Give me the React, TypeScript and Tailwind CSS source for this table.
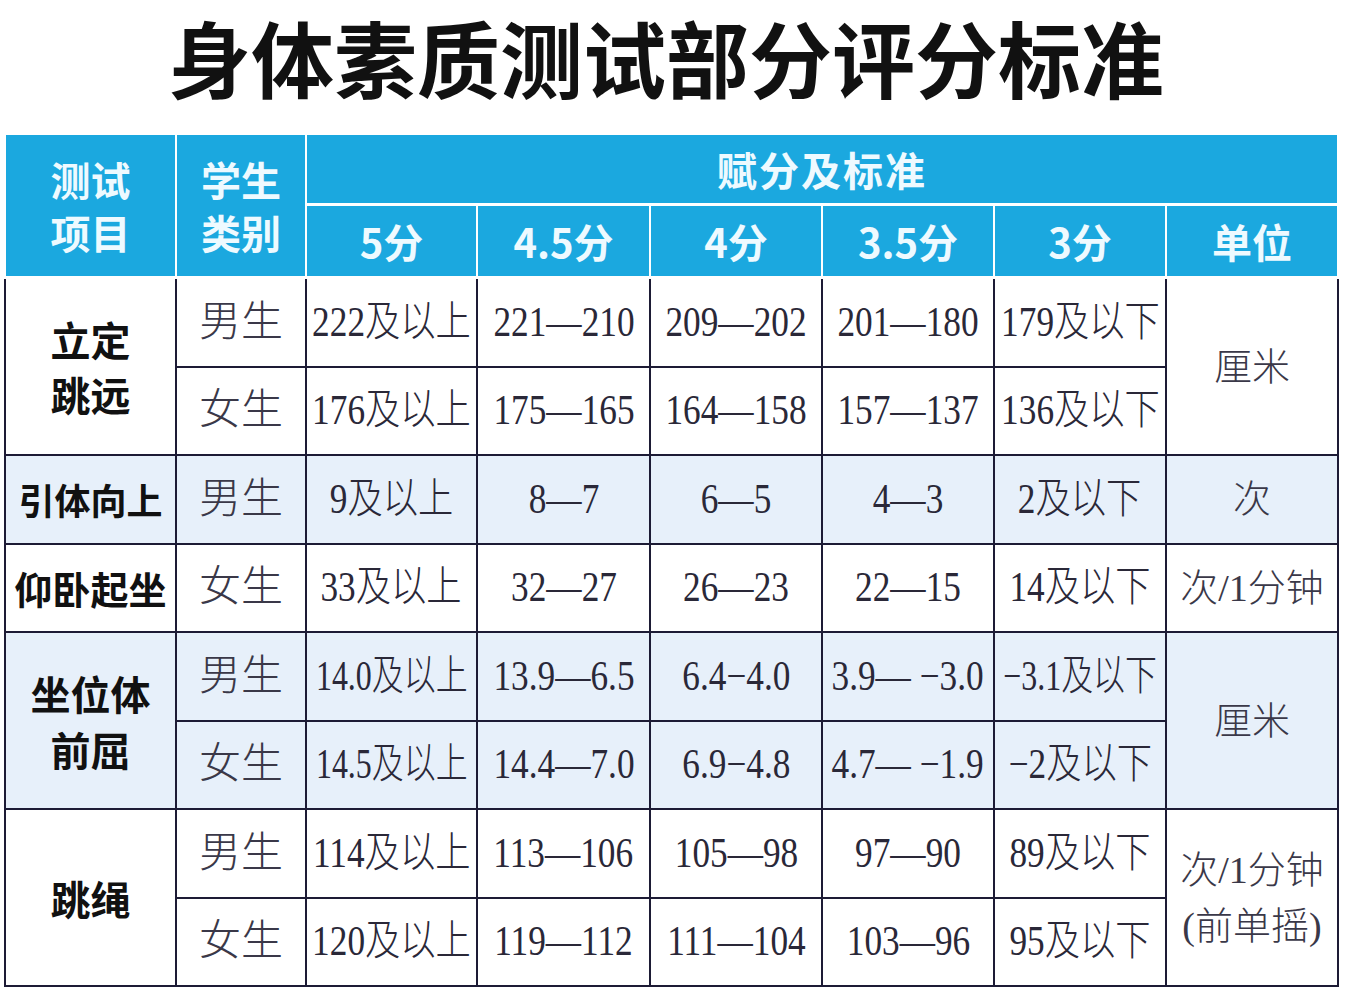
import React from 'react';

const sans = "font-['Noto_Sans_CJK_SC','Noto_Sans',sans-serif]";
const serif = "font-['Liberation_Serif','Noto_Sans_CJK_SC',serif]";

type Row = {
  item?: { label: React.ReactNode; span: number; size: string };
  group: string;
  values: string[];
  unit?: { label: React.ReactNode; span: number };
  tint: boolean;
};

const rows: Row[] = [
  {
    item: { label: <>立定<br />跳远</>, span: 2, size: 'text-[40px] leading-[55px]' },
    group: '男生',
    values: ['222及以上', '221—210', '209—202', '201—180', '179及以下'],
    unit: { label: '厘米', span: 2 },
    tint: false,
  },
  { group: '女生', values: ['176及以上', '175—165', '164—158', '157—137', '136及以下'], tint: false },
  {
    item: { label: '引体向上', span: 1, size: 'text-[36px] leading-[48px]' },
    group: '男生',
    values: ['9及以上', '8—7', '6—5', '4—3', '2及以下'],
    unit: { label: '次', span: 1 },
    tint: true,
  },
  {
    item: { label: '仰卧起坐', span: 1, size: 'text-[38px] leading-[48px]' },
    group: '女生',
    values: ['33及以上', '32—27', '26—23', '22—15', '14及以下'],
    unit: { label: '次/1分钟', span: 1 },
    tint: false,
  },
  {
    item: { label: <>坐位体<br />前屈</>, span: 2, size: 'text-[40px] leading-[56px]' },
    group: '男生',
    values: ['14.0及以上', '13.9—6.5', '6.4−4.0', '3.9— −3.0', '−3.1及以下'],
    unit: { label: '厘米', span: 2 },
    tint: true,
  },
  { group: '女生', values: ['14.5及以上', '14.4—7.0', '6.9−4.8', '4.7— −1.9', '−2及以下'], tint: true },
  {
    item: { label: '跳绳', span: 2, size: 'text-[40px] leading-[52px]' },
    group: '男生',
    values: ['114及以上', '113—106', '105—98', '97—90', '89及以下'],
    unit: { label: <>次/1分钟<br />(前单摇)</>, span: 2 },
    tint: false,
  },
  { group: '女生', values: ['120及以上', '119—112', '111—104', '103—96', '95及以下'], tint: false },
];

const App = () => {
  return (
    <div className="w-[1352px] min-h-[1002px] bg-white">
      <h1
        className={`${sans} pt-[6px] pr-[20px] text-center text-[83px] font-bold leading-[100px] whitespace-nowrap text-[#111]`}
      >
        身体素质测试部分评分标准
      </h1>

      {/* header */}
      <div className="mt-[29px] ml-[4px] w-[1335px] px-[2px] grid grid-cols-[169px_128px_169px_171px_170px_170px_170px_170px] grid-rows-[68px_70px] gap-x-[2px] gap-y-[3px]">
        <div className={`${sans} row-span-2 bg-[#1ba8df] flex items-center justify-center text-center text-[40px] font-bold leading-[53px] text-[#eefaff]`}>
          测试<br />项目
        </div>
        <div className={`${sans} row-span-2 bg-[#1ba8df] flex items-center justify-center text-center text-[40px] font-bold leading-[53px] text-[#eefaff]`}>
          学生<br />类别
        </div>
        <div className={`${sans} col-span-6 bg-[#1ba8df] flex items-center justify-center text-[40px] font-bold tracking-[2px] text-[#eefaff]`}>
          赋分及标准
        </div>
        {['5分', '4.5分', '4分', '3.5分', '3分', '单位'].map((h) => (
          <div
            key={h}
            className={`${sans} bg-[#1ba8df] flex items-center justify-center text-[40px] font-bold text-[#eefaff]`}
          >
            {h}
          </div>
        ))}
      </div>

      {/* body */}
      <div className="mt-[3px] ml-[4px] w-[1335px] px-[2px] pb-[2px] bg-[#1d1b35] grid grid-cols-[169px_128px_169px_171px_170px_170px_170px_170px] grid-rows-[repeat(8,86.5px)] gap-[2px]">
        {rows.map((r, i) => {
          const bg = r.tint ? 'bg-[#e7f0fa]' : 'bg-white';
          return (
            <React.Fragment key={i}>
              {r.item && (
                <div
                  className={`${sans} ${bg} ${r.item.span === 2 ? 'row-span-2' : ''} flex items-center justify-center text-center font-bold text-[#111] ${r.item.size}`}
                >
                  <div>{r.item.label}</div>
                </div>
              )}
              <div className={`${serif} ${bg} flex items-center justify-center text-[42px] font-light text-[#3a3848]`}>
                {r.group}
              </div>
              {r.values.map((v, j) => (
                <div key={j} className={`${serif} ${bg} flex items-center justify-center overflow-visible`}>
                  <span
                    className={`inline-block whitespace-nowrap text-[42px] font-light text-[#2a2838] ${
                      v.length >= 7 && v.includes('及') ? 'scale-x-[0.76]' : 'scale-x-[0.84]'
                    }`}
                  >
                    {v}
                  </span>
                </div>
              ))}
              {r.unit && (
                <div
                  className={`${serif} ${bg} ${r.unit.span === 2 ? 'row-span-2' : ''} flex items-center justify-center text-center text-[38px] leading-[56px] font-light text-[#3a3848]`}
                >
                  <div>{r.unit.label}</div>
                </div>
              )}
            </React.Fragment>
          );
        })}
      </div>
    </div>
  );
};

export default App;
